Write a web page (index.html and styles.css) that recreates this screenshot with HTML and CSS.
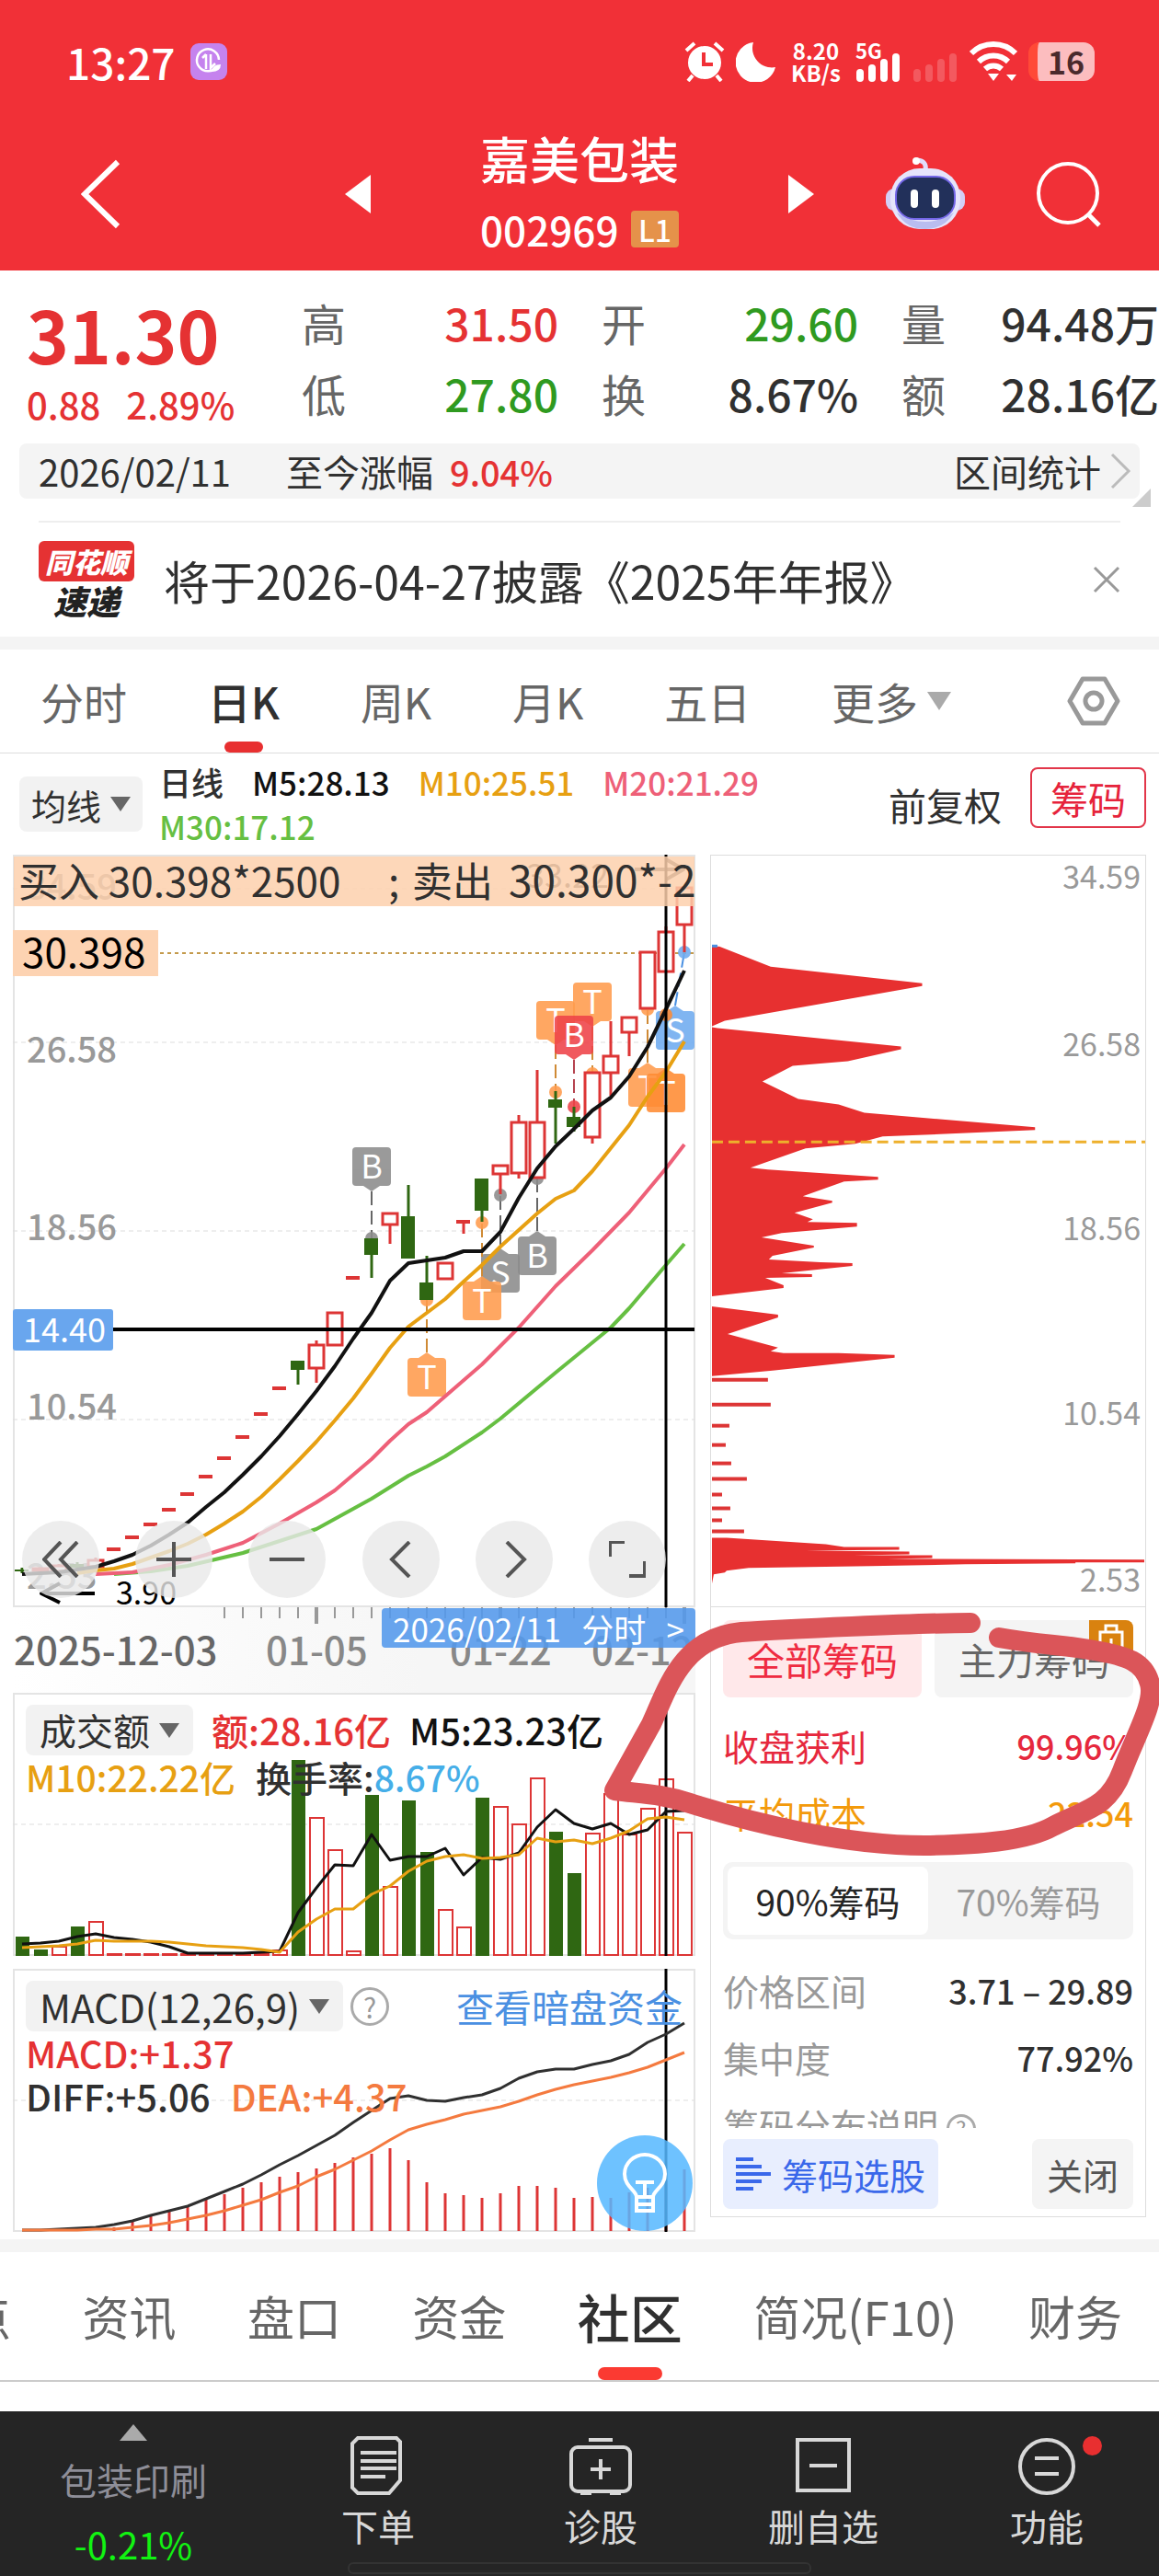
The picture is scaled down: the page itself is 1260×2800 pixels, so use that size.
FILE: index.html
```html
<!DOCTYPE html>
<html lang="zh-CN">
<head>
  <meta charset="UTF-8">
  <meta name="viewport" content="width=device-width, initial-scale=1">
  <title>嘉美包装 002969</title>
  <link rel="stylesheet" href="styles.css">
</head>
<body>
  <header class="top">
    <div class="status">
      <span class="status-time">13:27</span>
      <svg class="status-app" viewBox="0 0 40 40" width="40" height="40">
        <rect width="40" height="40" rx="9" fill="#c583ee"/>
        <path d="M29 25a12 12 0 1 1 2-7M17 12v16M17 12l-4 4M22 12v15l5-5" fill="none" stroke="#fff" stroke-width="2.5"/>
        <path d="M23 31q1-8 10-8q0 8-10 8z" fill="#fff"/>
      </svg>
      <div class="status-icons">
        <svg viewBox="0 0 44 44" width="44" height="44">
          <circle cx="22" cy="23" r="18" fill="#fff"/>
          <path d="M2 10l9-8M42 10l-9-8M9 37l-5 6M35 37l5 6" stroke="#fff" stroke-width="4"/>
          <path d="M21 12v13h10" fill="none" stroke="#f13037" stroke-width="4"/>
        </svg>
        <svg viewBox="0 0 44 44" width="44" height="44">
          <path d="M19 1A22 22 0 1 0 43 28A21 21 0 0 1 19 1z" fill="#fff"/>
        </svg>
        <span class="speed">8.20<br>KB/s</span>
        <span class="signal">
          <b>5G</b>
          <svg viewBox="0 0 50 44" width="50" height="44">
            <path d="M5 40v-6M18 40V29M31 40V23M44 40V17" stroke="#fff" stroke-width="8" stroke-linecap="round"/>
          </svg>
        </span>
        <svg viewBox="0 0 50 44" width="50" height="44">
          <path d="M5 40v-6M18 40V29M31 40V23M44 40V17" stroke="#fff" stroke-opacity=".2" stroke-width="8" stroke-linecap="round"/>
        </svg>
        <svg viewBox="0 0 52 44" width="52" height="44">
          <path d="M2 13a34 34 0 0 1 48 0M10 22a23 23 0 0 1 32 0M17 30a13 13 0 0 1 18 0" fill="none" stroke="#fff" stroke-width="6"/>
          <path d="M20 35h12l-6 8zM40 36h11l-5 7z" fill="#fff"/>
        </svg>
        <span class="battery">16</span>
      </div>
    </div>
    <div class="titlebar">
      <button class="icon-btn back" aria-label="返回">
        <svg viewBox="0 0 44 76" width="44" height="76"><path d="M40 3L4 38l36 35" fill="none" stroke="#fff" stroke-width="6"/></svg>
      </button>
      <div class="stock">
        <button class="icon-btn" aria-label="上一只"><svg viewBox="0 0 28 42" width="28" height="42"><path d="M28 0v42L0 21z" fill="#fff"/></svg></button>
        <div class="stock-name">
          <h1>嘉美包装</h1>
          <p>002969 <span class="level">L1</span></p>
        </div>
        <button class="icon-btn" aria-label="下一只"><svg viewBox="0 0 28 42" width="28" height="42"><path d="M0 0v42l28-21z" fill="#fff"/></svg></button>
      </div>
      <div class="tools">
        <button class="icon-btn" aria-label="智能助手">
          <svg viewBox="0 0 86 80" width="86" height="80">
            <path d="M43 14q2-10-9-11" fill="none" stroke="#e2dcfb" stroke-width="5" stroke-linecap="round"/>
            <circle cx="33" cy="4" r="4" fill="#fff"/>
            <rect x="0" y="34" width="86" height="24" rx="9" fill="#d3cff6"/>
            <rect x="5" y="12" width="76" height="66" rx="32" fill="#e6e4fb"/>
            <path d="M12 60q31 20 62 0q-10 18-31 18t-31-18z" fill="#b9bdf0"/>
            <rect x="11" y="21" width="64" height="46" rx="20" fill="#22305a" stroke="#7467e8" stroke-width="2"/>
            <path d="M31 39v12M54 39v12" stroke="#fff" stroke-width="8" stroke-linecap="round"/>
          </svg>
        </button>
        <button class="icon-btn" aria-label="搜索">
          <svg viewBox="0 0 72 72" width="72" height="72"><circle cx="35" cy="35" r="32" fill="none" stroke="#fff" stroke-width="4"/><path d="M57 58l12 12" stroke="#fff" stroke-width="5"/></svg>
        </button>
      </div>
    </div>
  </header>

  <section class="quote">
    <div class="price">
      <strong>31.30</strong>
      <p><span>0.88</span><span>2.89%</span></p>
    </div>
    <dl class="stats">
      <div><dt>高</dt><dd class="up">31.50</dd></div>
      <div><dt>开</dt><dd class="down">29.60</dd></div>
      <div><dt>量</dt><dd>94.48万</dd></div>
      <div><dt>低</dt><dd class="down">27.80</dd></div>
      <div><dt>换</dt><dd>8.67%</dd></div>
      <div><dt>额</dt><dd>28.16亿</dd></div>
    </dl>
  </section>

  <div class="range">
    <span>2026/02/11</span>
    <span class="range-label">至今涨幅</span>
    <span class="range-value up">9.04%</span>
    <a class="range-link" href="#range">区间统计
      <svg viewBox="0 0 24 40" width="24" height="40"><path d="M2 2l18 18L2 38" fill="none" stroke="#bbb" stroke-width="3"/></svg>
    </a>
    <i class="corner"></i>
  </div>

  <div class="notice">
    <div class="notice-logo"><b>同花顺</b><em>速递</em></div>
    <p>将于2026-04-27披露《2025年年报》</p>
    <button class="icon-btn" aria-label="关闭公告">
      <svg viewBox="0 0 30 30" width="30" height="30"><path d="M2 2l26 26M28 2L2 28" stroke="#999" stroke-width="3"/></svg>
    </button>
  </div>

  <nav class="periods">
    <a href="#fs">分时</a>
    <a href="#day" class="active">日K</a>
    <a href="#week">周K</a>
    <a href="#month">月K</a>
    <a href="#five">五日</a>
    <a href="#more">更多<i class="caret light"></i></a>
    <button class="icon-btn" aria-label="设置">
      <svg viewBox="0 0 58 54" width="58" height="54"><path d="M17 3h24l14 24-14 24H17L3 27z" fill="none" stroke="#999" stroke-width="5" stroke-linejoin="round"/><circle cx="29" cy="27" r="9" fill="none" stroke="#999" stroke-width="5"/></svg>
    </button>
  </nav>

  <main class="market">
    <div class="indicators">
      <button class="picker">均线<i class="caret"></i></button>
      <p class="averages">
        <span>日线</span><span class="ma5">M5:28.13</span><span class="ma10">M10:25.51</span><span class="ma20">M20:21.29</span><span class="ma30">M30:17.12</span>
      </p>
      <span class="adjust">前复权</span>
      <button class="chip-toggle">筹码</button>
    </div>

    <div class="charts">
      <div class="left">
        <div class="panel">
          <svg id="kline" class="plot" viewBox="14 929 742 818"></svg>
          <div class="chart-tools">
            <button aria-label="最早"><svg viewBox="0 0 40 40"><path d="M20 1L2 20l18 19M38 1L20 20l18 19"/></svg></button>
            <button aria-label="放大"><svg viewBox="0 0 40 40"><path d="M1 20h38M20 1v38"/></svg></button>
            <button aria-label="缩小"><svg viewBox="0 0 40 40"><path d="M1 20h38"/></svg></button>
            <button aria-label="左移"><svg viewBox="0 0 40 40"><path d="M29 1L10 20l19 19"/></svg></button>
            <button aria-label="右移"><svg viewBox="0 0 40 40"><path d="M12 1l19 19-19 19"/></svg></button>
            <button aria-label="全屏"><svg viewBox="0 0 40 40"><path d="M1 17V1h16M39 22v16H22"/></svg></button>
          </div>
        </div>
        <div class="dates">
          <svg id="dates" class="plot" viewBox="14 1747 742 93"></svg>
          <button class="date-tag"><span>2026/02/11</span><span>分时</span><span>&gt;</span></button>
        </div>
        <div class="panel volume">
          <svg id="volume" class="plot" viewBox="14 1840 742 286"></svg>
          <div class="legend">
            <button class="picker">成交额<i class="caret"></i></button>
            <span class="up">额:28.16亿</span>
            <span class="ma5">M5:23.23亿</span>
            <p><span class="ma10">M10:22.22亿</span><span>换手率:<span class="cyan">8.67%</span></span></p>
          </div>
        </div>
        <div class="panel macd">
          <svg id="macd" class="plot" viewBox="14 2140 742 286"></svg>
          <div class="legend">
            <button class="picker">MACD(12,26,9)<i class="caret"></i></button>
            <span class="help big">?</span>
            <a class="funds" href="#funds">查看暗盘资金</a>
            <p><span class="up">MACD:+1.37</span></p>
            <p><span>DIFF:+5.06</span><span class="dea">DEA:+4.37</span></p>
          </div>
          <button class="bulb" aria-label="提示">
            <svg viewBox="0 0 50 68" width="50" height="68"><path d="M16 49C16 42 3 38 3 24a22 21 0 0 1 44 0c0 14-13 18-13 25zM16 49v15h18V49M16 57h18M15 33h20M25 33v16" fill="none" stroke="#fff" stroke-width="4"/></svg>
          </button>
        </div>
      </div>

      <aside class="chips">
        <svg id="chips" class="plot" viewBox="773 929 473 818"></svg>
        <div class="chips-body">
          <div class="chips-tabs">
            <button class="active">全部筹码</button>
            <button>主力筹码
              <span class="lock"><svg viewBox="0 0 48 34" width="48" height="34"><path d="M12 13h24v22H12zM18 13V6h12v7M24 20v7" fill="none" stroke="#fff" stroke-width="3"/></svg></span>
            </button>
          </div>
          <dl>
            <div class="profit"><dt>收盘获利</dt><dd>99.96%</dd></div>
            <div class="cost"><dt>平均成本</dt><dd>22.54</dd></div>
          </dl>
          <div class="segment">
            <button class="active">90%筹码</button>
            <button>70%筹码</button>
          </div>
          <dl class="grey">
            <div><dt>价格区间</dt><dd>3.71 – 29.89</dd></div>
            <div><dt>集中度</dt><dd>77.92%</dd></div>
          </dl>
          <p class="explain">筹码分布说明 <span class="help">?</span></p>
          <div class="chips-actions">
            <button class="pick">
              <svg viewBox="0 0 38 38" width="38" height="38"><path d="M0 3h19M0 11h28M0 19h38M0 27h28M0 35h19" stroke="#3a68ea" stroke-width="4"/></svg>
              筹码选股
            </button>
            <button class="close">关闭</button>
          </div>
        </div>
      </aside>
    </div>

    <svg class="scribble" viewBox="0 819 1260 1614">
      <path d="M1055 1764C1000 1764 850 1771 806 1774C740 1780 725 1838 708 1874L668 1946C700 1950 720 1950 750 1960C820 1982 920 2006 1005 2006C1060 2005 1115 2002 1145 1985C1180 1967 1205 1965 1220 1925C1235 1885 1256 1850 1250 1830C1244 1806 1225 1800 1190 1794C1160 1788 1130 1788 1086 1780"/>
    </svg>
  </main>

  <nav class="sections">
    <a href="#points" class="cut">看点</a>
    <a href="#news">资讯</a>
    <a href="#board">盘口</a>
    <a href="#money">资金</a>
    <a href="#club" class="active">社区</a>
    <a href="#f10">简况(F10)</a>
    <a href="#finance">财务</a>
  </nav>

  <footer class="actions">
    <button class="sector"><i class="caret up-caret"></i><span>包装印刷</span><b>-0.21%</b></button>
    <button>
      <svg viewBox="0 0 68 66" width="68" height="66"><path d="M12 3h42l4 4v42L46 63H12l-6-6V9zM15 19h39M15 28h39M15 36h39M15 45h27"/></svg>
      下单
    </button>
    <button>
      <svg viewBox="0 0 68 66" width="68" height="66"><rect x="2" y="13" width="64" height="48" rx="7"/><path d="M21 5h26M34 26v22M23 37h22M12 63h12M44 63h12"/></svg>
      诊股
    </button>
    <button>
      <svg viewBox="0 0 68 66" width="68" height="66"><path d="M6 5h56v55H6zM19 33h30"/></svg>
      删自选
    </button>
    <button>
      <svg viewBox="0 0 68 66" width="68" height="66"><circle cx="34" cy="34" r="29"/><path d="M21 25h26M21 42h26"/></svg>
      功能<i class="dot"></i>
    </button>
    <div class="home"></div>
  </footer>

  <script src="charts.js"></script>
</body>
</html>
```

FILE: styles.css
```css
* {
  box-sizing: border-box;
}

body {
  margin: 0;
  background: #fff;
  color: #303030;
  font-family: "Noto Sans CJK SC", "Noto Sans", sans-serif;
  overflow-x: hidden;
}

h1, p, dl, dd {
  margin: 0;
}

button {
  border: 0;
  padding: 0;
  background: none;
  color: inherit;
  font: inherit;
  cursor: pointer;
}

a {
  color: inherit;
  text-decoration: none;
}

svg {
  display: block;
  flex: none;
}

.icon-btn {
  display: block;
  flex: none;
}

.up { color: #e53233; }
.down { color: #2f9a20; }
.cyan { color: #45aee8; }
.ma5 { color: #111; }
.ma10 { color: #e7a012; }
.ma20 { color: #ee6078; }
.ma30 { color: #66bf42; }
.dea { color: #f47a3f; }

.caret {
  display: inline-block;
  border: 11px solid transparent;
  border-top: 16px solid #666;
  border-bottom: 0;
  margin-left: 10px;
}

.caret.light {
  border-width: 20px 13px 0;
  border-top-color: #aaa;
}

/* header */
.top {
  background: #f13037;
  color: #fff;
}

.status {
  display: flex;
  align-items: center;
  height: 134px;
  padding: 0 70px 0 72px;
}

.status-time {
  font-size: 46px;
  font-weight: 500;
  line-height: 42px;
}

.status-app {
  margin-left: 16px;
}

.status-icons {
  display: flex;
  align-items: center;
  gap: 12px;
  margin-left: auto;
}

.speed {
  padding: 0 4px;
  font-size: 24px;
  font-weight: 700;
  line-height: 24px;
  text-align: center;
}

.signal {
  position: relative;
}

.signal b {
  position: absolute;
  top: -2px;
  left: 0;
  font-size: 22px;
  line-height: 22px;
}

.battery {
  width: 72px;
  height: 42px;
  border-radius: 12px;
  border-left: 10px solid #ff4a37;
  background: #fcbdbf;
  color: #4a2a2c;
  font-size: 34px;
  font-weight: 700;
  line-height: 42px;
  text-align: center;
}

.titlebar {
  display: grid;
  grid-template-columns: 375fr 510fr 375fr;
  align-items: center;
  height: 160px;
  padding-bottom: 10px;
}

.back {
  margin-left: 88px;
}

.stock {
  display: flex;
  align-items: center;
  justify-content: space-between;
}

.stock-name h1 {
  font-size: 54px;
  font-weight: 500;
  line-height: 76px;
}

.stock-name p {
  display: flex;
  align-items: center;
  justify-content: space-between;
  font-size: 44px;
  font-weight: 500;
  line-height: 78px;
}

.level {
  width: 52px;
  border-radius: 4px;
  background: #e5924a;
  font-size: 32px;
  line-height: 40px;
  text-align: center;
}

.tools {
  display: flex;
  align-items: center;
  justify-content: space-between;
  padding: 0 62px 0 78px;
}

/* quote */
.quote {
  display: grid;
  grid-template-columns: 328px 1fr;
  padding: 18px 0 16px;
}

.price {
  padding-left: 29px;
  color: #e53233;
}

.price strong {
  display: block;
  font-size: 78px;
  font-weight: 700;
  line-height: 100px;
}

.price p {
  display: flex;
  gap: 28px;
  font-size: 40px;
  font-weight: 500;
  line-height: 54px;
}

.stats {
  display: grid;
  grid-template-columns: 279fr 279fr 280fr;
  column-gap: 47px;
  font-size: 48px;
  line-height: 77px;
}

.stats div {
  display: flex;
  justify-content: space-between;
}

.stats dt {
  color: #666;
}

.stats dd {
  font-weight: 500;
  white-space: nowrap;
}

.range {
  position: relative;
  display: flex;
  align-items: center;
  height: 60px;
  margin: 0 21px;
  padding: 0 8px 0 21px;
  border-radius: 8px;
  background: #f4f4f4;
  font-size: 40px;
}

.range-label {
  margin: 0 18px 0 60px;
}

.range-value {
  font-size: 38px;
  font-weight: 500;
}

.range-link {
  display: flex;
  align-items: center;
  gap: 10px;
  margin-left: auto;
}

.corner {
  position: absolute;
  right: -12px;
  bottom: -9px;
  border-left: 20px solid transparent;
  border-bottom: 20px solid #ccc;
}

.notice {
  display: flex;
  align-items: center;
  height: 126px;
  margin: 24px 42px 0;
  border-top: 2px solid #eee;
}

.notice p {
  flex: 1;
  margin-left: 32px;
  font-size: 50px;
}

.notice-logo {
  width: 104px;
  font-style: italic;
  text-align: center;
}

.notice-logo b {
  display: block;
  border-radius: 6px;
  background: #e53233;
  color: #fff;
  font-size: 30px;
  font-weight: 900;
  line-height: 44px;
}

.notice-logo em {
  display: block;
  color: #222;
  font-size: 36px;
  font-weight: 900;
  line-height: 40px;
}

/* period tabs */
.periods {
  display: flex;
  align-items: center;
  justify-content: space-between;
  height: 127px;
  padding: 0 42px 0 44px;
  border-top: 14px solid #f4f4f4;
  border-bottom: 1px solid #ddd;
  color: #666;
  font-size: 47px;
}

.periods a {
  position: relative;
  line-height: 112px;
}

.periods a:nth-child(6) {
  display: flex;
  align-items: center;
  margin-right: 38px;
}

.periods .active {
  color: #303030;
  font-weight: 500;
}

.periods .active::after {
  content: "";
  position: absolute;
  left: 50%;
  bottom: 0;
  width: 42px;
  height: 12px;
  margin-left: -21px;
  border-radius: 6px;
  background: #e82f30;
}

/* charts */
.market {
  position: relative;
  padding-bottom: 8px;
}

.indicators {
  display: flex;
  align-items: center;
  height: 110px;
  padding: 0 14px 0 21px;
}

.picker {
  display: flex;
  align-items: center;
  justify-content: center;
  border-radius: 8px;
  background: #f2f2f2;
  color: #303030;
  white-space: nowrap;
}

.indicators .picker {
  width: 134px;
  height: 60px;
  font-size: 38px;
}

.averages {
  flex: 1;
  display: flex;
  flex-wrap: wrap;
  column-gap: 31px;
  margin: 0 80px 0 18px;
  font-size: 35px;
  font-weight: 500;
  line-height: 48px;
}

.adjust {
  font-size: 41px;
}

.chip-toggle {
  width: 126px;
  height: 66px;
  margin: 0 0 14px 31px;
  border: 2px solid #e2364a;
  border-radius: 8px;
  color: #e6233b;
  font-size: 41px;
  line-height: 60px;
}

.charts {
  display: grid;
  grid-template-columns: 742fr 474fr;
  gap: 16px;
  padding: 0 14px;
}

.plot {
  width: 100%;
  height: auto;
}

.panel {
  position: relative;
}

.chart-tools {
  position: absolute;
  left: 10px;
  right: 32px;
  bottom: 10px;
  display: flex;
  justify-content: space-between;
}

.chart-tools button {
  display: grid;
  place-items: center;
  width: 84px;
  height: 84px;
  border-radius: 50%;
  background: rgba(233, 233, 233, .8);
}

.chart-tools svg {
  width: 40px;
  fill: none;
  stroke: #555;
  stroke-width: 4;
}

.dates {
  position: relative;
  background: linear-gradient(90deg, #fff, #f6f6f6 60%);
}

.date-tag {
  position: absolute;
  top: 1px;
  right: 0;
  display: flex;
  justify-content: space-between;
  width: 341px;
  padding: 0 12px;
  border-radius: 4px;
  background: rgba(83, 153, 236, .88);
  color: #fff;
  font-size: 35px;
  line-height: 43px;
}

.legend {
  position: absolute;
  top: 13px;
  left: 14px;
  right: 14px;
  display: flex;
  flex-wrap: wrap;
  align-items: center;
  column-gap: 16px;
  font-size: 40px;
  line-height: 47px;
}

.volume .legend {
  column-gap: 20px;
}

.legend > span, .legend p {
  font-weight: 500;
}

.legend .picker {
  height: 55px;
  padding: 0 15px;
}

.legend p {
  display: flex;
  flex-basis: 100%;
  gap: 22px;
}

.volume p {
  font-size: 39px;
}

.macd .picker {
  font-size: 42px;
}

.funds {
  margin-left: auto;
  color: #4a90e2;
  font-size: 41px;
}

.macd {
  margin-top: 14px;
}

.help {
  display: inline-block;
  width: 32px;
  height: 32px;
  border: 3px solid #aaa;
  border-radius: 50%;
  color: #999;
  font-size: 24px;
  line-height: 26px;
  text-align: center;
}

.legend .big {
  width: 42px;
  height: 42px;
  margin-left: -8px;
  font-size: 30px;
  font-weight: 400;
  line-height: 36px;
}

.bulb {
  position: absolute;
  right: 3px;
  bottom: 1px;
  display: grid;
  place-items: center;
  width: 104px;
  height: 104px;
  border-radius: 50%;
  background: rgba(86, 184, 255, .86);
}

/* chip distribution */
.chips {
  align-self: start;
  border: 1px solid #ddd;
}

.chips-body {
  padding: 14px 13px 8px;
  border-top: 1px solid #ddd;
}

.chips button {
  border-radius: 8px;
  white-space: nowrap;
}

.chips-tabs {
  display: grid;
  grid-template-columns: 1fr 1fr;
  gap: 14px;
  margin-bottom: 16px;
  font-size: 41px;
}

.chips-tabs button {
  position: relative;
  height: 84px;
  overflow: hidden;
  background: #f4f4f4;
  color: #666;
}

.chips-tabs .active {
  background: #ffe8ea;
  color: #ef2b41;
}

.lock {
  position: absolute;
  top: 0;
  right: 0;
  background: #d9820f;
}

.chips dl div {
  display: flex;
  align-items: center;
  justify-content: space-between;
  font-size: 39px;
  line-height: 73px;
}

.chips dd {
  font-size: 36px;
  font-weight: 500;
}

.profit { color: #e6283d; }
.cost { color: #f39a0b; }
.grey dt { color: #999; }

.segment {
  display: grid;
  grid-template-columns: 1fr 1fr;
  height: 84px;
  margin: 17px 0 19px;
  padding: 5px;
  border-radius: 10px;
  background: #f4f4f4;
  color: #999;
  font-size: 39px;
}

.segment .active {
  background: #fff;
  color: #252525;
}

.explain {
  height: 40px;
  overflow: hidden;
  color: #999;
  font-size: 39px;
  line-height: 73px;
}

.explain .help {
  vertical-align: 2px;
}

.chips-actions {
  display: flex;
  justify-content: space-between;
  margin-top: 12px;
  font-size: 39px;
}

.chips-actions button {
  height: 76px;
}

.pick {
  display: flex;
  align-items: center;
  gap: 12px;
  padding: 0 14px;
  background: #e8eefe;
  color: #3a68ea;
}

.chips-actions .close {
  padding: 0 16px;
  background: #f4f4f4;
  color: #555;
}

.scribble {
  position: absolute;
  top: 0;
  left: 0;
  width: 100%;
  fill: none;
  stroke: #db5559;
  stroke-width: 22;
  stroke-linecap: round;
  stroke-linejoin: round;
  pointer-events: none;
}

/* bottom tabs */
.sections {
  display: flex;
  align-items: center;
  justify-content: space-between;
  height: 155px;
  padding-right: 40px;
  border-top: 14px solid #f4f4f4;
  border-bottom: 2px solid #ccc;
  color: #666;
  font-size: 51px;
  line-height: 139px;
}

.sections a {
  position: relative;
  white-space: nowrap;
}

.sections .cut {
  margin-left: -90px;
}

.sections .active {
  color: #303030;
  font-size: 57px;
  font-weight: 500;
}

.sections .active::after {
  content: "";
  position: absolute;
  left: 50%;
  bottom: 0;
  width: 70px;
  height: 14px;
  margin-left: -35px;
  border-radius: 7px;
  background: #fb3a32;
}

.actions {
  position: relative;
  display: grid;
  grid-template-columns: 290fr 242fr 242fr 242fr 244fr;
  align-items: start;
  height: 179px;
  margin-top: 32px;
  background: #252525;
  color: #d8d8d8;
  font-size: 40px;
  line-height: 60px;
}

.actions button {
  position: relative;
  display: flex;
  flex-direction: column;
  align-items: center;
  padding-top: 26px;
  gap: 2px;
}

.actions svg {
  fill: none;
  stroke: #d8d8d8;
  stroke-width: 4;
}

.actions .sector {
  padding-top: 14px;
  gap: 0;
  color: #8e8e98;
}

.sector span {
  margin-top: 12px;
}

.sector b {
  margin-top: 10px;
  color: #12f312;
  font-weight: 400;
}

.up-caret {
  margin: 0;
  border-width: 0 15px 18px;
  border-bottom: 18px solid #aaa;
}

.dot {
  position: absolute;
  top: 27px;
  right: 62px;
  width: 21px;
  height: 21px;
  border-radius: 50%;
  background: #e82f30;
}

.home {
  position: absolute;
  left: 30%;
  bottom: 2px;
  width: 40%;
  height: 13px;
  border: 2px solid #333;
  border-radius: 6px;
}
```

FILE: charts.js
```js
const RED = '#dd3535';
const GREEN = '#2f6712';
const FONT = 'font-family="Noto Sans CJK SC, sans-serif"';
const xAt = i => 24 + i * 20;

const line = (x1, y1, x2, y2, color, width, extra = '') =>
  `<line x1="${x1}" y1="${y1}" x2="${x2}" y2="${y2}" stroke="${color}" stroke-width="${width}" ${extra}/>`;
const rect = (x, y, w, h, fill, extra = '') =>
  `<rect x="${x}" y="${y}" width="${w}" height="${h}" fill="${fill}" ${extra}/>`;
const text = (x, y, size, fill, str, extra = '') =>
  `<text x="${x}" y="${y}" font-size="${size}" fill="${fill}" ${FONT} ${extra}>${str}</text>`;
const poly = (points, color, width = 4) =>
  `<polyline points="${points}" fill="none" stroke="${color}" stroke-width="${width}" stroke-linejoin="round"/>`;
const frame = (y, h) => rect(15, y + 1, 740, h - 2, 'none', 'stroke="#e4e4e4" stroke-width="2"');
const grid = y => line(14, y, 755, y, '#ddd', 1, 'stroke-dasharray="5 4"');
const series = (values, base) => values.map((v, i) => `${xAt(i)},${base - v}`).join(' ');

// index, up?, body top, body bottom, high, low
const candles = [
  [0, 0, 1706, 1708, 1704, 1710], [1, 1, 1705, 1707, 1705, 1707], [2, 1, 1702, 1708, 1700, 1708],
  [3, 0, 1700, 1704, 1698, 1706], [4, 1, 1696, 1703, 1693, 1703],
  [5, 1, 1684], [6, 1, 1671], [7, 1, 1657], [8, 1, 1641], [9, 1, 1624], [10, 1, 1605],
  [11, 1, 1585], [12, 1, 1562], [13, 1, 1537], [14, 1, 1509],
  [15, 0, 1479, 1489, 1479, 1505], [16, 1, 1462, 1487, 1457, 1503], [17, 1, 1427, 1462, 1427, 1462],
  [18, 1, 1389], [19, 0, 1346, 1364, 1346, 1389], [20, 1, 1319, 1331, 1319, 1352],
  [21, 0, 1322, 1368, 1288, 1368], [22, 0, 1394, 1413, 1365, 1413], [23, 1, 1373, 1390, 1373, 1390],
  [24, 1, 1328, 1328, 1328, 1341], [25, 0, 1281, 1316, 1281, 1328], [26, 1, 1267, 1276, 1267, 1298],
  [27, 1, 1220, 1275, 1212, 1281], [28, 1, 1220, 1280, 1163, 1280], [29, 0, 1195, 1204, 1186, 1243],
  [30, 0, 1214, 1225, 1203, 1230], [31, 1, 1166, 1236, 1166, 1243], [32, 1, 1148, 1166, 1110, 1191],
  [33, 1, 1106, 1122, 1106, 1148], [34, 1, 1035, 1096, 1035, 1096], [35, 1, 1013, 1056, 1007, 1056],
  [36, 1, 965, 1005, 965, 1035]
];

function candle([i, up, top, bottom = top, high = top, low = bottom]) {
  const x = xAt(i);
  const color = up ? RED : GREEN;
  if (bottom === top) {
    return rect(x - 8, top - 2, 15, 4, color) + (low > top ? line(x, top, x, low, color, 3) : '');
  }
  const wicks = line(x, high, x, top, color, 3) + line(x, bottom, x, low, color, 3);
  return wicks + (up
    ? rect(x - 8, top, 16, bottom - top, '#fff', `stroke="${color}" stroke-width="3"`)
    : rect(x - 8, top, 15, bottom - top, color));
}

const ma5 = '24,1711 64,1709 104,1703 124,1697 144,1690 164,1680 184,1668 204,1655 224,1638 244,1622 264,1603 284,1583 304,1561 324,1537 344,1512 364,1485 384,1455 404,1427 424,1392 444,1373 464,1370 484,1367 504,1360 524,1360 544,1339 564,1302 584,1270 604,1246 624,1227 644,1207 664,1193 684,1170 704,1138 724,1097 744,1055';
const ma10 = '84,1710 104,1707 124,1705 144,1700 164,1693 184,1686 204,1678 224,1668 244,1656 264,1643 284,1627 304,1608 324,1588 344,1567 364,1544 384,1520 404,1493 424,1465 444,1442 464,1427 484,1412 504,1393 524,1375 544,1355 564,1337 584,1319 604,1303 624,1294 644,1273 664,1248 684,1223 704,1192 724,1165 744,1132';
const ma20 = '104,1711 144,1709 184,1701 224,1690 264,1677 304,1656 344,1633 364,1620 404,1586 424,1566 444,1548 464,1535 524,1483 564,1443 604,1398 644,1359 684,1318 724,1270 744,1244';
const ma30 = '124,1711 164,1708 204,1702 264,1688 344,1662 404,1629 444,1604 464,1594 484,1583 524,1557 544,1542 604,1492 664,1443 684,1422 724,1375 744,1352';

// letter, color, box centre, box top, dot x, dot y, dash color
const marks = [
  ['B', '#8c8c8c', 404, 1247, 404, 1346, '#666'], ['T', '#ff9c4d', 604, 1088, 604, 1187, '#cf8a35'],
  ['T', '#ff9c4d', 644, 1068, 644, 1167, '#cf8a35'], ['B', '#ee4348', 624, 1104, 624, 1203, '#b5434f'],
  ['S', '#6fabf0', 734, 1099, 744, 1035, '#4a90e2'], ['T', '#ff9c4d', 704, 1161, 704, 1097, '#cf8a35'],
  ['T', '#ff8b33', 724, 1167, 724, 1103, '#cf8a35'], ['B', '#8c8c8c', 584, 1344, 584, 1281, '#666'],
  ['S', '#8c8c8c', 544, 1363, 544, 1299, '#666'], ['T', '#ff9c4d', 524, 1393, 524, 1329, '#cf8a35'],
  ['T', '#ff9c4d', 464, 1476, 464, 1413, '#cf8a35']
];

function mark([letter, color, x, top, dotX, dotY, dash]) {
  const above = dotY < top;
  const edge = above ? top : top + 42;
  const tip = above ? top - 6 : top + 48;
  return line(x, tip, dotX, dotY, dash, 2, 'stroke-dasharray="15 6"') +
    `<g opacity=".88"><circle cx="${dotX}" cy="${dotY}" r="7" fill="${color}"/>` +
    rect(x - 21, top, 42, 42, color, 'rx="4"') +
    `<path d="M${x - 9} ${edge}L${x} ${tip}L${x + 9} ${edge}z" fill="${color}"/></g>` +
    text(x, top + 34, 36, '#fff', letter, 'text-anchor="middle"');
}

document.getElementById('kline').innerHTML =
  frame(929, 818) + [966, 1133, 1338, 1543].map(grid).join('') +
  [['34.59', 978], ['26.58', 1155], ['18.56', 1348], ['10.54', 1543]]
    .map(([s, y]) => text(29, y, 38, '#999', s, 'font-weight="500"')).join('') +
  text(29, 1727, 38, '#999', '2.53', 'font-weight="500"') +
  text(572, 965, 36, '#555', '33.22') +
  poly('690,945 742,945', '#555') + poly('724,934 743,945 724,956', '#555') +
  line(174, 1036, 755, 1036, '#c49a4c', 2, 'stroke-dasharray="4 4"') +
  marks.map(mark).join('') + candles.map(candle).join('') +
  poly(ma30, '#66bf42') + poly(ma20, '#ee6078') + poly(ma10, '#e7a012') + poly(ma5, '#111') +
  line(724, 929, 724, 1747, '#000', 3) + line(123, 1445, 755, 1445, '#000', 4) +
  rect(14, 1423, 109, 45, '#69a6ee', 'rx="3"') + text(25, 1459, 36, '#fff', '14.40') +
  poly('65,1721 45,1732 65,1742', '#000') + poly('45,1732 103,1732', '#000') +
  text(126, 1744, 34, '#000', '3.90') +
  rect(15, 931, 740, 54, '#fdcfab', 'opacity=".84"') +
  text(20, 975, 44, '#303030', '买入 30.398*2500') + text(422, 975, 44, '#303030', ';') +
  text(448, 975, 44, '#303030', '卖出') + text(553, 975, 46, '#303030', '30.300*-2') +
  rect(14, 1011, 158, 50, '#fdd3b2') + text(24, 1052, 44, '#000', '30.398');

let ticks = '';
for (let x = 244; x <= 744; x += 20) {
  const major = x === 344 || x === 544 || x === 744;
  ticks += line(x, 1747, x, major ? 1765 : 1759, '#999', major ? 4 : 2);
}
document.getElementById('dates').innerHTML = ticks +
  text(15, 1810, 42, '#666', '2025-12-03', 'font-weight="500"') +
  [['01-05', 289], ['01-22', 489], ['02-12', 643]].map(([s, x]) => text(x, 1810, 42, '#888', s, 'font-weight="500"')).join('');

// turnover
const volumes = [21, 7, 10, 32, 37, 2, 2, 2, 2, 2, 2, 2, 2, 3, 6, 213, 150, 115, 5, 175, 75, 169, 113, 50, 31, 172, 162, 143, 193, 135, 90, 133, 176, 132, 160, 192, 134];
const fallDays = [0, 1, 3, 15, 19, 21, 22, 25, 29, 30];
const vol5 = [13, 14, 16, 21, 24, 20, 18, 15, 10, 3, 3, 3, 3, 4, 5, 47, 74, 99, 98, 132, 104, 108, 108, 117, 88, 107, 105, 112, 140, 159, 144, 138, 144, 132, 137, 157, 158];
const vol10 = [9, 10, 11, 13, 17, 16, 16, 16, 15, 13, 11, 10, 9, 7, 4, 26, 40, 51, 51, 67, 76, 92, 103, 108, 110, 106, 107, 110, 128, 124, 126, 122, 128, 136, 149, 151, 148];

document.getElementById('volume').innerHTML = frame(1840, 286) + grid(1983) +
  volumes.map((h, i) => fallDays.includes(i)
    ? rect(xAt(i) - 7, 2126 - h, 15, h, GREEN)
    : rect(xAt(i) - 7, 2126 - h, 15, h - 1, '#fff', `stroke="${RED}" stroke-width="2"`)).join('') +
  line(724, 1840, 724, 2126, '#000', 3) +
  poly(series(vol5, 2126), '#111', 3) + poly(series(vol10, 2126), '#e7a012', 3);

const bars = [4, 10, 16, 23, 27, 34, 40, 47, 53, 59, 64, 68, 74, 80, 84, 90, 77, 53, 41, 39, 36, 41, 49, 49, 47, 36, 37, 36, 42, 47, 55, 67];
const diff = [1, 1, 2, 3, 4, 7, 11, 17, 22, 27, 35, 43, 51, 61, 72, 82, 93, 104, 118, 131, 144, 147, 142, 141, 145, 148, 155, 166, 173, 176, 176, 181, 185, 192, 205, 214, 226];
const dea = [1, 1, 1, 1, 2, 2, 4, 6, 9, 13, 17, 22, 28, 34, 42, 49, 59, 67, 77, 87, 99, 110, 116, 121, 127, 131, 135, 141, 148, 154, 159, 163, 167, 172, 178, 186, 194];

document.getElementById('macd').innerHTML = frame(2140, 286) + grid(2283) +
  bars.map((h, i) => line(xAt(i + 5), 2425, xAt(i + 5), 2425 - h, RED, 3)).join('') +
  line(724, 2140, 724, 2426, '#000', 3) +
  poly(series(diff, 2425), '#303030', 3) + poly(series(dea, 2425), '#f47a3f', 3);

// chip distribution
const peaks = [
  '774,1028 782,1028 838,1050 1003,1068 1003,1071 788,1109 774,1115',
  '774,1116 780,1117 980,1137 980,1140 922,1153 862,1158 829,1175 868,1194 912,1200 940,1209 1126,1225 1126,1228 960,1235 930,1243 876,1248 816,1269 835,1271 955,1279 955,1282 918,1284 873,1300 905,1305 905,1307 864,1318 884,1325 878,1328 932,1329 932,1333 850,1340 828,1345 885,1354 885,1356 840,1365 836,1369 892,1372 927,1373 927,1376 850,1384 883,1385 883,1388 832,1389 852,1397 852,1400 774,1409',
  '774,1420 846,1429 846,1432 791,1450 846,1465 838,1469 852,1471 912,1471 973,1473 973,1476 840,1490 774,1496',
  '774,1672 790,1672 898,1679 918,1682 978,1682 978,1685 876,1686 989,1687 989,1690 928,1691 1014,1691 1014,1694 965,1695 1245,1696 1245,1699 1170,1699 1170,1700 1050,1701 947,1703 814,1705 790,1708 788,1710 776,1712 774,1722'
];
const spikes = [[1500, 835], [1527, 838], [1550, 793], [1571, 789], [1591, 795], [1608, 812], [1625, 785], [1640, 794], [1653, 785], [1665, 809]];

document.getElementById('chips').innerHTML =
  peaks.map(p => `<polygon points="${p}" fill="#e73030"/>`).join('') +
  spikes.map(([y, x]) => line(774, y, x, y, RED, 4)).join('') +
  rect(774, 1026, 6, 3, '#4a90e2') +
  line(774, 1241, 1246, 1241, '#eeb02c', 3, 'stroke-dasharray="12 6"') +
  [['34.59', 965], ['26.58', 1147], ['18.56', 1348], ['10.54', 1549], ['2.53', 1731]]
    .map(([s, y]) => text(1241, y, 34, '#999', s, 'text-anchor="end"')).join('');
```
